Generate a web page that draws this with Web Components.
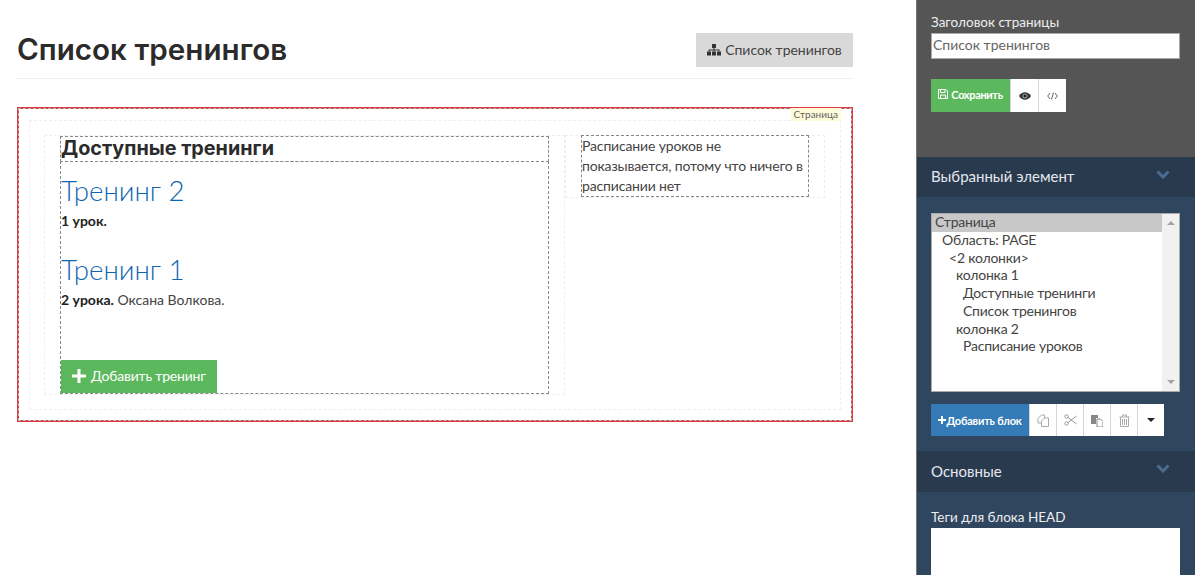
<!DOCTYPE html>
<html lang="ru">
<head>
<meta charset="utf-8">
<title>Список тренингов</title>
<style>
    html, body { margin: 0; height: 575px; overflow: hidden; background: #fff; }
    body { font-family: Lato, "Liberation Sans", sans-serif; font-size: 14px; color: #333; }
</style>
</head>
<body>
<editor-app>
    <page-header title="Список тренингов">
        <tool-button slot="action" kind="gray" icon="sitemap" label="Список тренингов"></tool-button>
    </page-header>
    <page-canvas>
        <edit-column>
            <edit-block heading>Доступные тренинги</edit-block>
            <edit-block>
                <training-item name="Тренинг 2" lessons="1 урок."></training-item>
                <training-item name="Тренинг 1" lessons="2 урока." author="Оксана Волкова."></training-item>
                <tool-button kind="add" icon="plus" label="Добавить тренинг"></tool-button>
            </edit-block>
        </edit-column>
        <edit-column slot="second">
            <edit-block>Расписание уроков не показывается, потому что ничего в расписании нет</edit-block>
        </edit-column>
    </page-canvas>

    <side-panel slot="side"></side-panel>
</editor-app>

<script>
const icons = {
    sitemap: `<svg width="14" height="13" viewBox="0 0 14 13" fill="currentColor"><rect x="5" y="1" width="4" height="4"/><rect x="0" y="8.5" width="4" height="4"/><rect x="5" y="8.5" width="4" height="4"/><rect x="10" y="8.5" width="4" height="4"/><path d="M6.5 5h1v1.5H12.500V8.500h-1V7.500h-4v1h-1v-1h-4v1h-1V6.500h5z"/></svg>`,
    plus: `<svg width="14" height="14" viewBox="0 0 14 14" fill="currentColor"><path d="M5.500 0h3v5.500H14v3H8.500V14h-3V8.500H0v-3h5.500z"/></svg>`,
    plusSmall: `<svg width="8" height="8" viewBox="0 0 8 8" fill="currentColor"><path d="M3 0h2v3h3v2H5v3H3V5H0V3h3z"/></svg>`,
    save: `<svg width="10" height="10" viewBox="0 0 10 10" fill="none" stroke="currentColor"><path d="M.5.5h7.500l1.500 1.500v7.500h-9z"/><path d="M2.500.5v3h4.500v-3M2.500 9.500V6h5v3.500"/></svg>`,
    eye: `<svg width="12" height="8" viewBox="0 0 12 8" fill="#333"><path d="M0 4c1.600-2.500 3.600-3.700 6-3.700S10.400 1.500 12 4c-1.600 2.500-3.600 3.700-6 3.700S1.600 6.500 0 4z"/><circle cx="6" cy="4" r="2.500" fill="#999"/><circle cx="6" cy="4" r="1.400" fill="#222"/></svg>`,
    code: `<svg width="11" height="8" viewBox="0 0 11 8" fill="none" stroke="#556" stroke-width=".9"><path d="M3 1 .7 4 3 7M8 1l2.300 3L8 7M6.500.5l-2 7"/></svg>`,
    copy: `<svg width="12" height="13" viewBox="0 0 12 13" fill="none" stroke="#aaa"><path d="M7.500 4V1H4.500L1 4.500V9h3.500"/><path d="M7.500 4h4v8.500h-7V7z"/></svg>`,
    cut: `<svg width="13" height="12" viewBox="0 0 13 12" fill="none" stroke="#999"><circle cx="2.500" cy="2.500" r="1.700"/><circle cx="2.500" cy="9.500" r="1.700"/><path d="M4 3.500 12.500 10M4 8.500 12.500 2"/></svg>`,
    paste: `<svg width="12" height="13" viewBox="0 0 12 13" fill="#888"><path d="M0 1h7v3H5v6H0z"/><path d="M6 5h3.500L12 7.500V13H6z" fill="#fff" stroke="#888"/></svg>`,
    trash: `<svg width="11" height="13" viewBox="0 0 11 13" fill="none" stroke="#aaa"><path d="M.5 3h10M3.500 3V1h4v2M1.500 3v9.500h8V3M3.500 5v6M5.500 5v6M7.500 5v6"/></svg>`,
    caret: `<svg width="8" height="4" viewBox="0 0 8 4" fill="#222"><path d="M0 0h8L4 4z"/></svg>`,
    chevron: `<svg width="14" height="9" viewBox="0 0 14 9" fill="none" stroke="#4a6a92" stroke-width="3"><path d="M1.500 1.500 7 7l5.500-5.500"/></svg>`
};

class EditorApp extends HTMLElement {
    constructor() {
        super();
        this.attachShadow({ mode: "open" }).innerHTML = `
            <style>
                :host { display: flex; height: 575px; }
                .main { width: 836px; margin-left: 17px; flex: none; }
                .side { margin-left: 63px; flex: 1; min-width: 0; }
            </style>
            <div class="main"><slot></slot></div>
            <div class="side"><slot name="side"></slot></div>
        `;
    }
}

class PageHeader extends HTMLElement {
    constructor() {
        super();
        this.attachShadow({ mode: "open" }).innerHTML = `
            <style>
                :host { display: block; margin-bottom: 28px; }
                .bar {
                    display: flex;
                    justify-content: space-between;
                    align-items: flex-start;
                    height: 78px;
                    box-sizing: content-box;
                    border-bottom: 1px solid #eee;
                }
                h1 {
                    margin: 32px 0 0;
                    font: 600 29.600px/35px Inter, "Open Sans", sans-serif;
                    color: #2b2b2b;
                }
                .action { margin-top: 33px; }
            </style>
            <div class="bar">
                <h1>${this.getAttribute("title")}</h1>
                <div class="action"><slot name="action"></slot></div>
            </div>
        `;
    }
}

class ToolButton extends HTMLElement {
    constructor() {
        super();
        const kind = this.getAttribute("kind");
        const icon = icons[this.getAttribute("icon")];
        const label = this.getAttribute("label");
        this.attachShadow({ mode: "open" }).innerHTML = `
            <style>
                :host { display: block; flex: none; }
                .btn {
                    display: flex;
                    justify-content: center;
                    align-items: center;
                    box-sizing: border-box;
                    white-space: nowrap;
                }
                .gray { width: 157px; height: 34px; gap: 4px; padding-bottom: 2px; background: #d9d9d9; color: #444; font-size: 14px; letter-spacing: -.03px; }
                .gray svg { color: #333; }
                .add { width: 156px; height: 33px; gap: 5px; padding-bottom: 2px; background: #5cb85c; color: #fff; font-size: 14px; letter-spacing: -.2px; border: 1px solid #5cb85c; }
                .save { width: 79px; height: 33px; gap: 3px; padding-bottom: 3px; background: #5cb85c; color: #fff; font-size: 11px; font-weight: 700; letter-spacing: -.35px; }
                .blue { width: 98px; height: 32px; gap: 0; background: #337ab7; color: #fff; font-size: 11px; font-weight: 700; letter-spacing: -.2px; }
                .white { width: 28px; height: 33px; background: #fff; border-left: 1px solid #d5d5d5; }
                .white.small { width: 27px; height: 32px; }
            </style>
            <div class="btn ${kind}">${icon}${label ? `<span>${label}</span>` : ""}</div>
        `;
    }
}

class PageCanvas extends HTMLElement {
    constructor() {
        super();
        this.attachShadow({ mode: "open" }).innerHTML = `
            <style>
                :host {
                    display: block;
                    position: relative;
                    height: 315px;
                    box-sizing: border-box;
                    border: 2px solid #e0393d;
                    padding: 11px 10px 10px;
                }
                .frame {
                    position: absolute;
                    inset: -1px;
                    border: 1px dashed #a9bbbd;
                    pointer-events: none;
                }
                .tag {
                    position: absolute;
                    top: -1px;
                    right: 10px;
                    padding: 0 3px;
                    background: #fdfbd8;
                    color: #666;
                    font-size: 10px;
                    line-height: 13px;
                }
                .outer {
                    box-sizing: border-box;
                    height: 100%;
                    border: 1px dashed #eee;
                    padding: 14px 14px 13px;
                }
                .row { display: flex; height: 100%; }
                .first { width: 521px; flex: none; }
                .second { width: 260px; flex: none; }
            </style>
            <div class="frame"></div>
            <div class="tag">Страница</div>
            <div class="outer">
                <div class="row">
                    <div class="first"><slot></slot></div>
                    <div class="second"><slot name="second"></slot></div>
                </div>
            </div>
        `;
    }
}

class EditColumn extends HTMLElement {
    constructor() {
        super();
        this.attachShadow({ mode: "open" }).innerHTML = `
            <style>
                :host {
                    display: block;
                    box-sizing: border-box;
                    border: 1px dashed #eee;
                    padding: 0 15px;
                }
                :host(:not([slot])) { height: 260px; }
            </style>
            <slot></slot>
        `;
    }
}

class EditBlock extends HTMLElement {
    constructor() {
        super();
        this.attachShadow({ mode: "open" }).innerHTML = `
            <style>
                :host {
                    display: block;
                    box-sizing: border-box;
                    border: 1px dashed #888;
                    line-height: 20px;
                    font-size: 14px;
                    letter-spacing: -.15px;
                    color: #444;
                }
                :host([heading]) {
                    height: 26px;
                    font: 700 19.800px/23px Inter, Lato, sans-serif;
                    letter-spacing: 0;
                    color: #2b2b2b;
                }
                :host(:not([heading])) { margin-top: -1px; }
            </style>
            <slot></slot>
        `;
    }
}

class TrainingItem extends HTMLElement {
    constructor() {
        super();
        const author = this.getAttribute("author");
        this.attachShadow({ mode: "open" }).innerHTML = `
            <style>
                :host { display: block; height: 79px; }
                :host(:last-of-type) { height: 119px; }
                h3 {
                    margin: 0;
                    padding-top: 12px;
                    font: 300 27.700px/33px Lato, sans-serif;
                    letter-spacing: 0;
                    color: #0f66b0;
                }
                p { margin: 5px 0 0; font-size: 14px; line-height: 17px; letter-spacing: 0; color: #444; }
                b { color: #222; }
            </style>
            <h3>${this.getAttribute("name")}</h3>
            <p><b>${this.getAttribute("lessons")}</b>${author ? " " + author : ""}</p>
        `;
    }
}

class SideSection extends HTMLElement {
    constructor() {
        super();
        this.attachShadow({ mode: "open" }).innerHTML = `
            <style>
                :host { display: block; }
                .head {
                    display: flex;
                    justify-content: space-between;
                    height: 40px;
                    padding: 0 25px 0 14px;
                    background: #2a3a4e;
                    color: #e4e8ee;
                    font-size: 15px;
                    line-height: 38px;
                }
                :host([tall]) .head { height: 41px; line-height: 40px; }
                .head svg { margin-top: 13px; }
                .body { padding: 16px 15px 15px 14px; }
            </style>
            <div class="head"><span>${this.getAttribute("title")}</span>${icons.chevron}</div>
            <div class="body"><slot></slot></div>
        `;
    }
}

class ElementTree extends HTMLElement {
    constructor() {
        super();
        const rows = [
            [0, "Страница"], [1, "Область: PAGE"], [2, "<2 колонки>"], [3, "колонка 1"],
            [4, "Доступные тренинги"], [4, "Список тренингов"], [3, "колонка 2"], [4, "Расписание уроков"]
        ];
        const root = this.attachShadow({ mode: "open" });
        root.innerHTML = `
            <style>
                :host {
                    display: flex;
                    height: 179px;
                    box-sizing: border-box;
                    border: 1px solid #a9a9a9;
                    background: #fff;
                    color: #444;
                    font-size: 14px;
                    letter-spacing: -.22px;
                }
                .rows { flex: 1; }
                .row { height: 17.750px; line-height: 16px; white-space: nowrap; }
                .row.on { background: #c8c8c8; }
                .bar {
                    display: flex;
                    flex-direction: column;
                    justify-content: space-between;
                    align-items: center;
                    width: 17px;
                    padding: 7px 0;
                    box-sizing: border-box;
                    background: #f1f1f1;
                }
                .bar i { width: 0; height: 0; border: 4px solid transparent; }
                .bar i:first-child { border-top: 0; border-bottom-color: #a3a3a3; }
                .bar i:last-child { border-bottom: 0; border-top-color: #a3a3a3; }
            </style>
            <div class="rows"></div>
            <div class="bar"><i></i><i></i></div>
        `;
        const list = root.querySelector(".rows");
        rows.forEach(([level, text], i) => {
            const row = document.createElement("div");
            row.className = i === 0 ? "row on" : "row";
            row.style.paddingLeft = (3 + level * 7) + "px";
            row.textContent = text;
            list.appendChild(row);
        });
    }
}

class SidePanel extends HTMLElement {
    constructor() {
        super();
        this.attachShadow({ mode: "open" }).innerHTML = `
            <style>
                :host {
                    display: block;
                    height: 575px;
                    overflow: hidden;
                    background: #30465f;
                    border-left: 1px solid #777;
                    color: #eee;
                }
                .top { height: 157px; box-sizing: border-box; padding: 14px 15px 0 14px; background: #555; }
                label { display: block; font-size: 13.500px; line-height: 16px; color: #eee; }
                .field {
                    height: 26px;
                    box-sizing: border-box;
                    margin-top: 3px;
                    padding-left: 1px;
                    border: 1px solid #aaa;
                    background: #fff;
                    color: #666;
                    font-size: 14px;
                    line-height: 22px;
                }
                .tools { display: flex; margin-top: 20px; }
                .blocks { display: flex; margin-top: 12px; }
                .head-label { margin: 1px 0 3px; }
                .area { height: 60px; background: #fff; }
            </style>
            <div class="top">
                <label>Заголовок страницы</label>
                <div class="field">Список тренингов</div>
                <div class="tools">
                    <tool-button kind="save" icon="save" label="Сохранить"></tool-button>
                    <tool-button kind="white" icon="eye"></tool-button>
                    <tool-button kind="white" icon="code"></tool-button>
                </div>
            </div>
            <side-section title="Выбранный элемент">
                <element-tree></element-tree>
                <div class="blocks">
                    <tool-button kind="blue" icon="plusSmall" label="Добавить блок"></tool-button>
                    <tool-button kind="white small" icon="copy"></tool-button>
                    <tool-button kind="white small" icon="cut"></tool-button>
                    <tool-button kind="white small" icon="paste"></tool-button>
                    <tool-button kind="white small" icon="trash"></tool-button>
                    <tool-button kind="white small" icon="caret"></tool-button>
                </div>
            </side-section>
            <side-section title="Основные" tall>
                <label class="head-label">Теги для блока HEAD</label>
                <div class="area"></div>
            </side-section>
        `;
    }
}

customElements.define("tool-button", ToolButton);
customElements.define("editor-app", EditorApp);
customElements.define("page-header", PageHeader);
customElements.define("page-canvas", PageCanvas);
customElements.define("edit-column", EditColumn);
customElements.define("edit-block", EditBlock);
customElements.define("training-item", TrainingItem);
customElements.define("side-section", SideSection);
customElements.define("element-tree", ElementTree);
customElements.define("side-panel", SidePanel);
</script>
</body>
</html>
